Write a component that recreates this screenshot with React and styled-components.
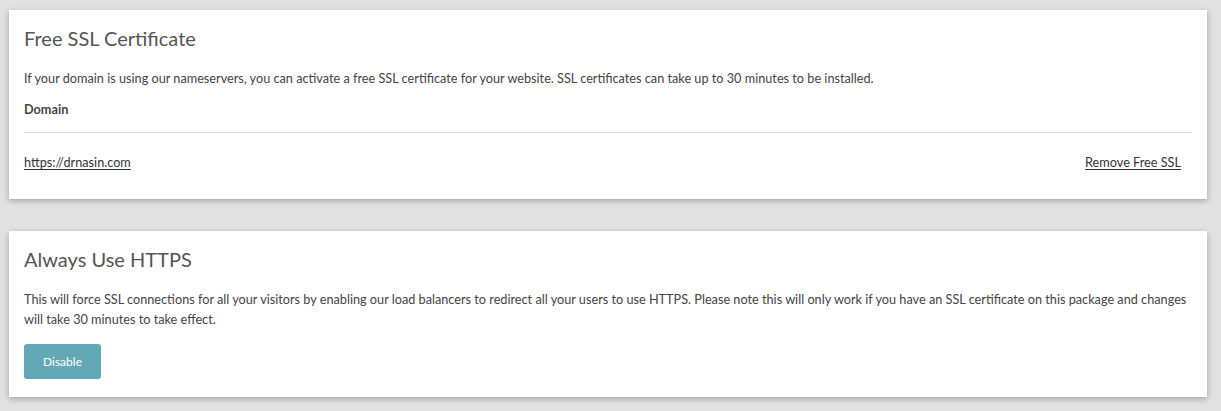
import React from "react";
import styled, { createGlobalStyle } from "styled-components";

const Global = createGlobalStyle`
  html, body { margin: 0; padding: 0; background: #e2e2e2; }
  body { font-family: Lato, "Open Sans", sans-serif; color: #444; }
`;

const Page = styled.div`
  display: flex;
  flex-direction: column;
  gap: 32px;
  padding: 10px 14px 14px 9px;
`;

const Card = styled.section`
  background: #fff;
  box-shadow: 0 2px 6px rgba(0, 0, 0, 0.28);
  padding: 14px 15px ${(p) => p.$pb || "18px"} 15px;
  display: flex;
  flex-direction: column;
`;

const Title = styled.h2`
  margin: 0;
  font-weight: 400;
  font-size: 20px;
  line-height: 28px;
  color: #555;
`;

const Text = styled.p`
  margin: 16px 0 0;
  font-size: 12.7px;
  line-height: 20px;
  color: #444;
`;

const Label = styled.div`
  margin-top: 11px;
  font-size: 12.7px;
  font-weight: 700;
  line-height: 20px;
  color: #444;
`;

const Divider = styled.hr`
  margin: 13px 0 0;
  border: 0;
  border-top: 1px solid #ddd;
`;

const Row = styled.div`
  display: flex;
  justify-content: space-between;
  align-items: center;
  padding: 19px 11px 19px 0;
`;

const Link = styled.a`
  font-size: 12.7px;
  line-height: 20px;
  color: #333;
  text-decoration: underline;
  text-underline-offset: 2px;
  cursor: pointer;
`;

const Button = styled.button`
  margin-top: 15px;
  align-self: flex-start;
  width: 77px;
  height: 35px;
  border: 0;
  border-radius: 3px;
  background: #62a9b5;
  color: #fff;
  font-family: inherit;
  font-size: 12px;
  cursor: pointer;
`;

export default function App() {
  return (
    <>
      <Global />
      <Page>
        <Card $pb="8px">
          <Title>Free SSL Certificate</Title>
          <Text>
            If your domain is using our nameservers, you can activate a free SSL certificate for your website. SSL certificates can take up to 30 minutes to be installed.
          </Text>
          <Label>Domain</Label>
          <Divider />
          <Row>
            <Link>https://drnasin.com</Link>
            <Link>Remove Free SSL</Link>
          </Row>
        </Card>
        <Card>
          <Title>Always Use HTTPS</Title>
          <Text>
            This will force SSL connections for all your visitors by enabling our load balancers to redirect all your users to use HTTPS. Please note this will only work if you have an SSL certificate on this package and changes will take 30 minutes to take effect.
          </Text>
          <Button>Disable</Button>
        </Card>
      </Page>
    </>
  );
}
